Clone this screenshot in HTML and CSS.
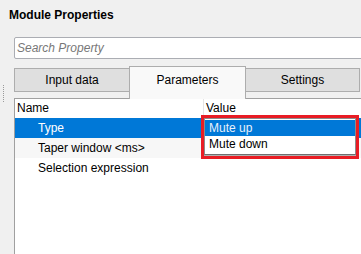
FILE: index.html
```html
<!DOCTYPE html>
<html>
<head>
<meta charset="utf-8">
<link rel="stylesheet" href="styles.css">
</head>
<body>
<div class="title">Module Properties</div>
<div class="main">
  <div class="gutter"><div class="grip"></div></div>
  <div class="panel">
    <div class="search">Search Property</div>
    <div class="tabbar">
      <div class="tab tab-first">Input data</div>
      <div class="tab tab-active">Parameters</div>
      <div class="tab tab-last">Settings</div>
    </div>
    <div class="tree">
      <div class="thead">
        <div class="col-name">Name</div>
        <div class="col-value">Value</div>
      </div>
      <div class="row row-selected">Type</div>
      <div class="row row-alt">Taper window &lt;ms&gt;</div>
      <div class="row">Selection expression</div>
      <div class="highlight">
        <div class="popup">
          <div class="item item-selected">Mute up</div>
          <div class="item">Mute down</div>
        </div>
      </div>
    </div>
  </div>
</div>
</body>
</html>
```
FILE: styles.css
```css
html, body {
  margin: 0;
  padding: 0;
}
body {
  width: 361px;
  height: 254px;
  overflow: hidden;
  background: #f0f0f0;
  font-family: "Liberation Sans", Arial, sans-serif;
  font-size: 12px;
  color: #000;
}
.title {
  padding: 8px 0 0 9px;
  height: 15px;
  line-height: 15px;
  font-weight: bold;
}
.main {
  display: flex;
  margin-top: 14px;
}
.gutter {
  width: 14px;
  flex: none;
}
.grip {
  margin: 48px 0 0 3px;
  height: 17px;
  border-left: 1px dotted #9a9a9a;
}
.panel {
  width: 360px;
  flex: none;
}
.search {
  box-sizing: border-box;
  height: 22px;
  width: 360px;
  background: #fff;
  border: 1px solid #abadb3;
  border-radius: 2px;
  padding-left: 2px;
  line-height: 20px;
  font-style: italic;
  color: #777;
}
.tabbar {
  display: flex;
  align-items: flex-start;
  margin-top: 7px;
  height: 32px;
}
.tab {
  box-sizing: border-box;
  margin-top: 2px;
  height: 24px;
  line-height: 22px;
  text-align: center;
  background: #dfdfdf;
  border: 1px solid #adadad;
}
.tab-first {
  width: 116px;
}
.tab-active {
  position: relative;
  z-index: 1;
  margin-top: 0;
  margin-left: -1px;
  width: 117px;
  height: 33px;
  padding-top: 2px;
  background: #f9f9f9;
  border-bottom: none;
}
.tab-last {
  margin-left: -1px;
  width: 115px;
}
.tree {
  position: relative;
  height: 160px;
  background: #fff;
  border-top: 1px solid #a0a0a0;
  border-left: 1px solid #a0a0a0;
}
.thead {
  display: flex;
  height: 19px;
  line-height: 19px;
}
.col-name {
  width: 186px;
  padding-left: 2px;
  border-right: 1px solid #e5e5e5;
}
.col-value {
  padding-left: 2px;
}
.row {
  height: 20px;
  line-height: 20px;
  padding-left: 23px;
}
.row-selected {
  background: #0078d7;
  color: #fff;
}
.row-alt {
  background: #f7f7f7;
}
.highlight {
  position: absolute;
  left: 186px;
  top: 16px;
  width: 158px;
  height: 44px;
  box-sizing: border-box;
  border: 3px solid #e81c24;
  z-index: 2;
}
.popup {
  box-sizing: border-box;
  height: 37px;
  background: #fff;
  border: 1px solid #8c8c8c;
  border-bottom-color: #6e6e6e;
  padding-top: 1px;
  box-shadow: 0 1px 0 #b0b0b0;
}
.item {
  height: 16px;
  line-height: 16px;
  padding-left: 4px;
}
.item-selected {
  background: #0078d7;
  color: #e8f1fb;
}
```
